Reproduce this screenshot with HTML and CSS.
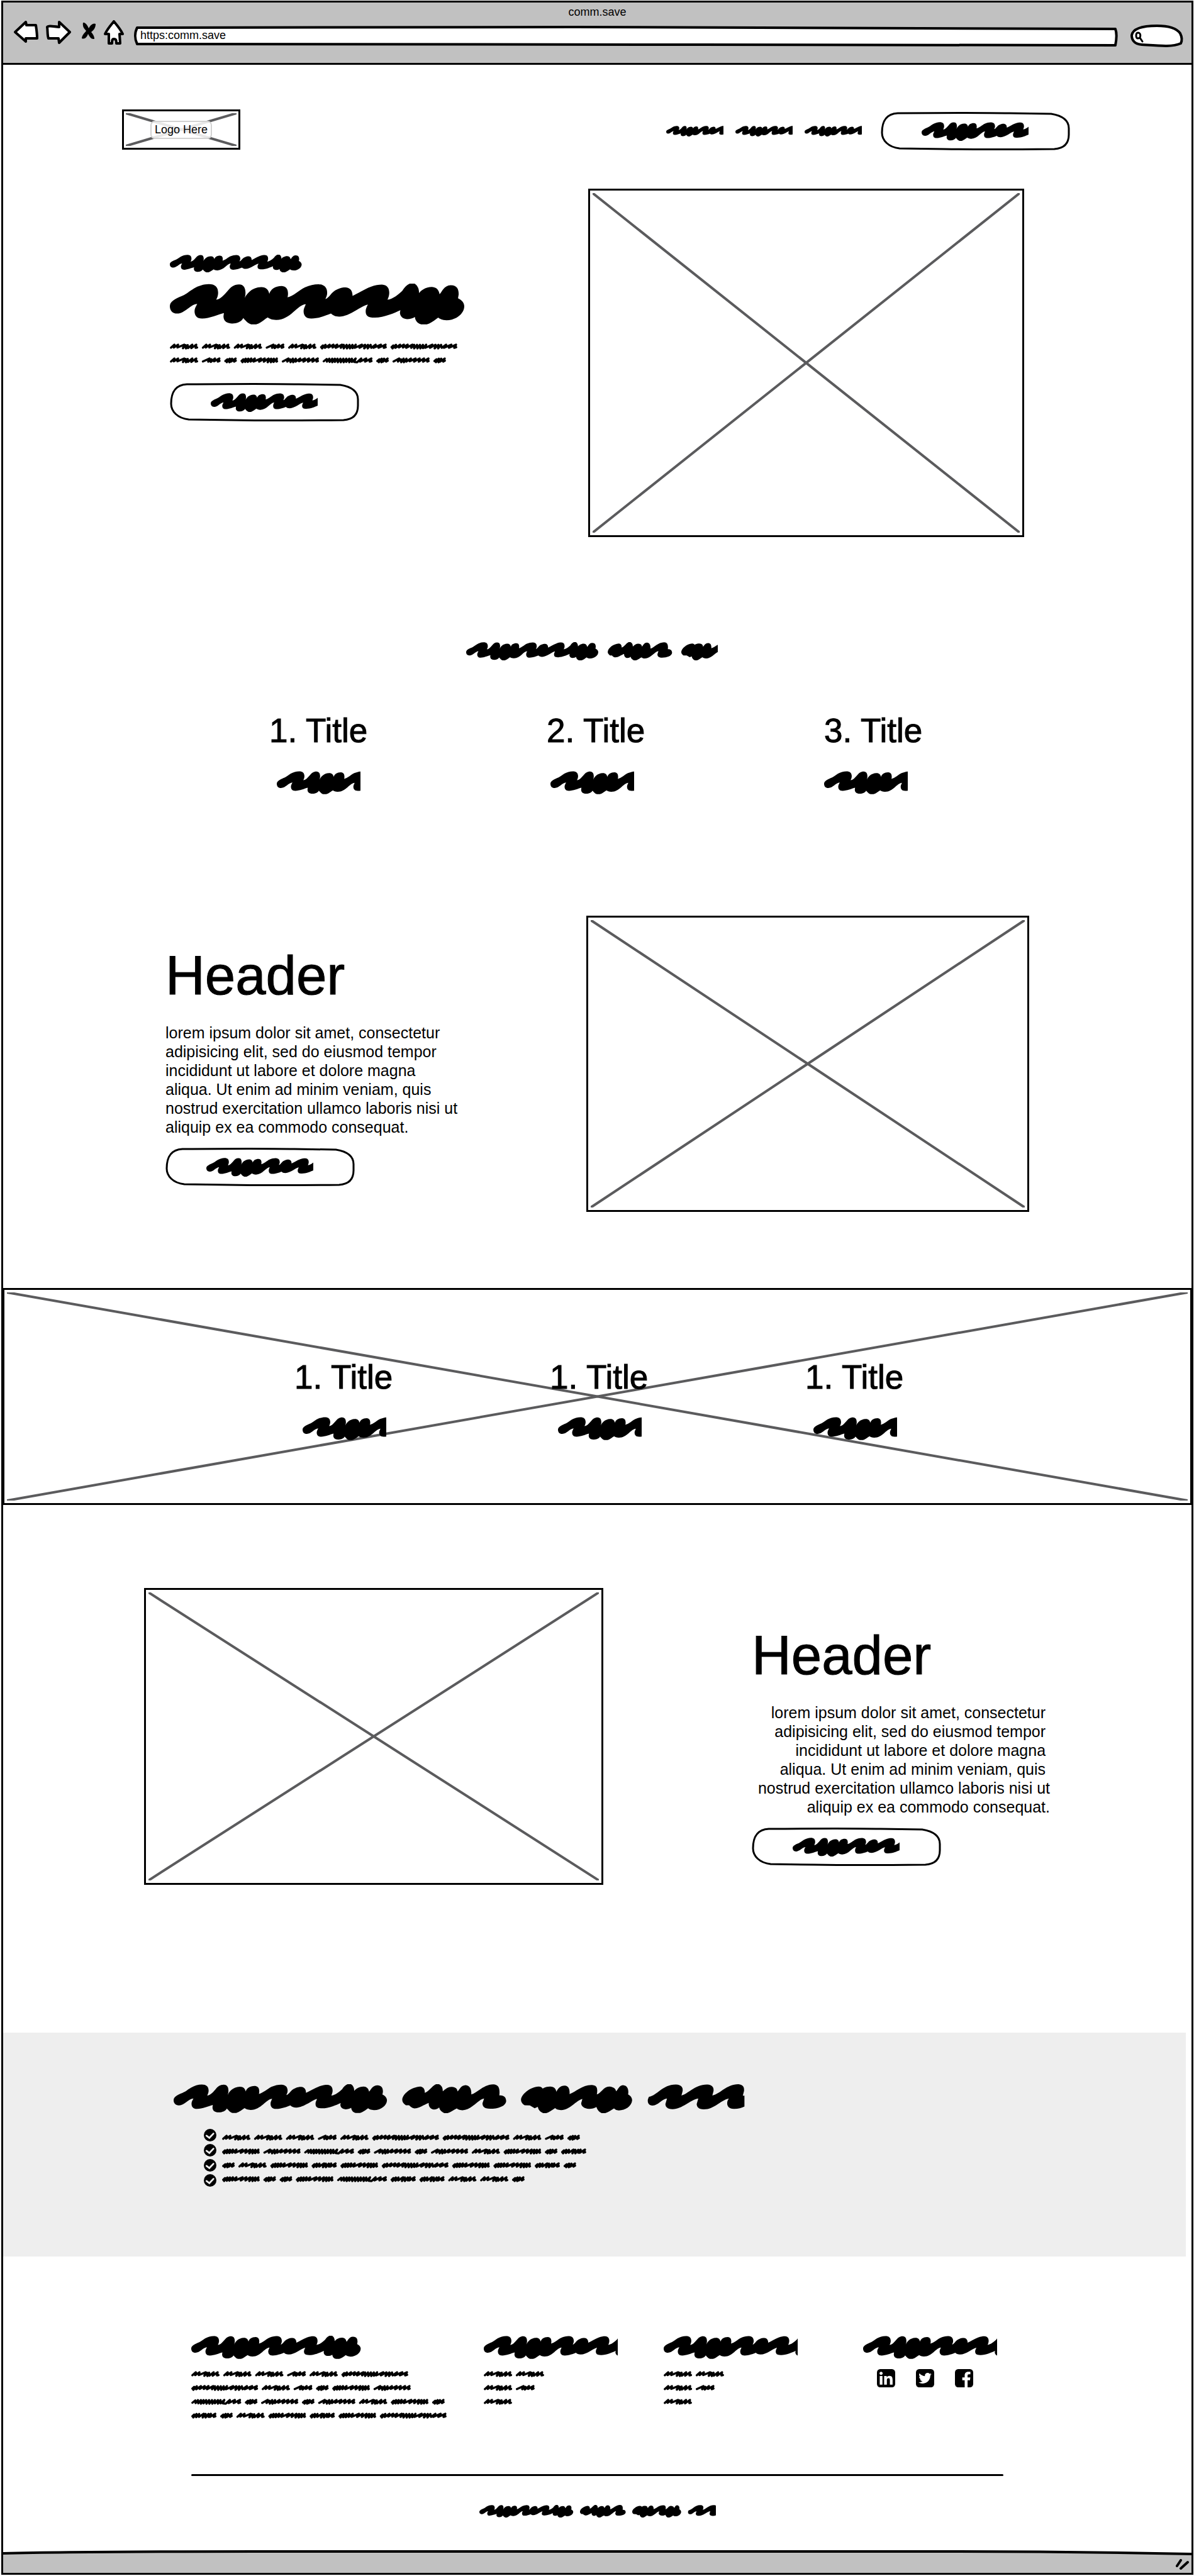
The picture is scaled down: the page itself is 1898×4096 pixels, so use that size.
FILE: index.html
```html
<!DOCTYPE html>
<html lang="en">
<head>
<meta charset="utf-8">
<meta name="viewport" content="width=device-width, initial-scale=1">
<title>comm.save</title>
<link rel="stylesheet" href="styles.css">
</head>
<body>
<svg class="defs" aria-hidden="true">
  <defs>
    <!-- One line of greeked heading text; each use shows as much of it as its viewBox covers -->
    <g id="headline">
      <path transform="translate(62 213) scale(.402 .7143) translate(-97 -327)" d="M97,482 C97,455 110,440 140,418 C170,402 185,378 205,360 C225,342 250,330 272,330 C300,330 314,350 314,390 C314,410 309,425 305,437 C325,435 340,405 355,380 C370,350 385,332 408,332 C430,332 437,360 437,390 C437,410 434,420 432,432 C440,400 465,352 508,351 C530,351 540,370 544,397 C550,365 570,343 600,343 C622,345 628,370 628,395 C628,405 627,415 626,421 C650,415 680,370 705,352 C725,338 745,331 765,331 C795,333 804,360 804,390 C804,410 799,420 796,432 C815,425 820,385 850,366 C865,355 875,353 888,353 C910,356 918,380 918,411 C940,395 970,365 1000,348 C1020,336 1035,333 1050,333 C1075,335 1083,360 1083,390 C1083,410 1078,425 1075,437 C1100,432 1125,400 1142,375 C1152,352 1160,338 1175,327 L1197,327 C1210,340 1217,360 1217,392 C1225,375 1245,350 1275,350 C1298,352 1306,375 1309,399 C1320,385 1328,340 1359,338 C1390,338 1395,370 1395,400 L1392,427 C1410,440 1420,460 1420,482 C1420,530 1385,578 1340,578 C1320,577 1310,568 1303,560 C1290,575 1270,598 1252,606 L1226,606 C1208,598 1200,580 1198,555 C1190,565 1175,570 1163,570 C1140,568 1131,545 1131,525 L1133,509 C1110,525 1060,560 1018,560 C985,560 977,545 977,515 C977,500 982,485 987,470 C960,475 905,553 858,553 C840,553 830,545 821,532 C800,545 765,565 733,566 C708,566 698,545 698,515 C698,500 703,485 708,468 C670,470 640,575 575,576 C555,575 545,568 537,559 C522,572 505,598 485,606 L462,606 C445,598 438,580 427,563 C420,585 400,600 377,600 C350,599 338,580 338,550 L340,528 C315,538 275,565 242,566 C218,566 208,545 208,515 C208,500 213,485 220,466 C190,468 165,532 130,532 C108,532 97,510 97,482Z"/>
      <path d="M632,322 C632,280 655,232 677,229 C685,232 689,250 688,273 C698,265 705,228 716,213 L723,213 C731,222 733,240 733,262 C740,245 746,231 755,231 C766,233 769,245 770,263 C775,250 778,220 790,219 C801,222 805,250 804,284 C820,270 835,215 859,214 C872,216 876,240 874,291 C885,288 891,305 891,330 C890,365 870,383 851,383 C835,383 832,365 832,345 L836,312 C820,320 805,393 782,393 C774,392 770,385 768,380 C760,390 752,408 745,413 L737,413 C730,405 725,390 724,374 C721,382 717,388 711,388 C702,386 697,365 698,342 C685,355 675,380 662,380 C656,378 652,368 649,359 L641,359 C635,348 632,335 632,322Z"/>
      <path d="M928,322 C928,285 950,232 972,229 C978,230 980,235 982,243 C988,232 993,229 1001,229 C1011,230 1015,245 1016,265 C1020,245 1026,223 1037,223 C1047,225 1050,250 1049,281 C1065,265 1080,219 1104,218 C1117,219 1120,240 1117,284 C1128,275 1133,230 1148,229 C1160,232 1164,245 1165,262 C1170,250 1173,220 1182,219 C1194,222 1197,250 1195,284 C1202,295 1205,308 1205,325 C1204,365 1188,394 1172,394 C1165,393 1162,385 1160,380 C1152,392 1145,408 1138,413 L1129,413 C1122,405 1118,390 1116,371 C1111,380 1105,384 1098,384 C1085,382 1078,365 1078,345 L1081,315 C1065,325 1050,392 1028,392 C1020,391 1016,385 1013,378 C1005,392 998,408 991,413 L983,413 C976,405 971,390 970,370 L962,379 L950,360 L937,359 C931,350 928,335 928,322Z"/>
      <path d="M1244,325 C1244,315 1246,308 1247,300 C1268,290 1280,216 1314,215 C1328,217 1332,235 1331,260 L1328,291 C1345,280 1360,216 1392,215 C1405,217 1409,235 1408,260 L1405,291 C1425,280 1440,213 1470,213 C1482,216 1485,235 1484,260 L1481,292 L1485,292 V367 C1478,375 1470,384 1459,384 C1446,384 1442,365 1442,345 C1442,330 1444,322 1446,312 C1425,325 1410,387 1384,387 C1370,387 1366,368 1366,350 L1370,312 C1350,320 1330,386 1306,386 C1292,385 1288,368 1288,350 L1292,312 C1278,318 1270,360 1256,361 C1247,360 1244,345 1244,325Z"/>
    </g>
    <g id="button-art">
      <path class="outline" d="M27,2 Q150,1 205,2 L271,3 C289,6 299,14 299,26 V36 C299,50 291,58 276,59 Q165,60 100,59 L30,58 C12,56 2,45 2,33 C2,14 9,3 27,2Z"/>
      <svg x="65" y="16" width="170" height="30" viewBox="62 213 414 200" preserveAspectRatio="none"><use href="#headline"/></svg>
    </g>
    <g id="tick">
      <circle cx="42" cy="42" r="42"/>
      <path class="tick-mark" d="M18,46 L37,60 L64,32"/>
    </g>
  </defs>
</svg>

<div class="browser">
  <header class="toolbar">
    <div class="window-title">comm.save</div>
    <div class="controls">
      <button class="tool back" type="button" aria-label="Back"><svg width="39" height="35"><path class="tool-shape" d="M2,18 L19,2 L20,7 L35,7 C36,14 37,20 37,28 L19,28 L19,33Z"/></svg></button>
      <button class="tool forward" type="button" aria-label="Forward"><svg width="40" height="37"><path class="tool-shape" d="M2,10 C3,8 8,8 21,10 L21,2 L38,18 L21,35 L20,28 L4,28 C2,22 3,16 2,10Z"/></svg></button>
      <button class="tool stop" type="button" aria-label="Stop"><svg width="23" height="27"><path d="M2,0 C6,-1 10,6 11,9 C14,3 19,0 22,2 C22,8 19,12 15,15 C20,21 20,24 20,26 C14,27 12,21 10,18 C8,23 5,27 0,25 C0,20 5,16 7,13 C3,9 1,6 2,0Z"/></svg></button>
      <button class="tool home" type="button" aria-label="Home"><svg width="33" height="39"><path class="tool-shape" d="M16,2 C21,8 27,15 30,22 L25,22 L26,37 L20,37 C20,33 20,30 16,30 C13,30 13,33 13,37 L8,37 L8,22 L2,22 C5,15 11,8 16,2Z"/></svg></button>
      <div class="address">
        <svg class="field-art" viewBox="0 0 1564 32" preserveAspectRatio="none"><path class="tool-shape" d="M5,2 L700,1 L1560,4 C1563,12 1562,20 1560,30 L900,29 L5,28 C1,20 1,10 5,2Z"/></svg>
        <input class="address-input" type="text" value="https:comm.save" aria-label="Address">
      </div>
      <div class="search">
        <svg class="field-art" viewBox="0 0 84 36"><path class="tool-shape" d="M18,32 C4,31 2,22 2,17 C4,6 20,2 42,2 C62,2 74,7 79,14 C82,20 82,26 80,30 C66,36 48,34 18,32Z"/><path class="lens" d="M12,13 C8,13 8,22 12,22 C17,22 17,13 12,13Z M15,21 L19,27"/></svg>
        <input class="search-input" type="search" aria-label="Search">
      </div>
    </div>
  </header>

  <main>
    <div class="topbar">
      <a class="logo" href="#"><svg class="cross" viewBox="0 0 100 100" preserveAspectRatio="none"><path d="M0,0 L100,100 M0,100 L100,0"/></svg><span class="logo-label">Logo Here</span></a>
      <nav class="nav" aria-label="Main">
        <a class="nav-link" href="#" aria-label="Link one"><svg width="91" height="17" viewBox="62 213 382 200" preserveAspectRatio="none"><use href="#headline"/></svg></a>
        <a class="nav-link" href="#" aria-label="Link two"><svg width="91" height="17" viewBox="62 213 382 200" preserveAspectRatio="none"><use href="#headline"/></svg></a>
        <a class="nav-link" href="#" aria-label="Link three"><svg width="91" height="17" viewBox="62 213 382 200" preserveAspectRatio="none"><use href="#headline"/></svg></a>
        <button class="pill" type="button" aria-label="Action"><svg width="301" height="61"><use href="#button-art"/></svg></button>
      </nav>
    </div>

    <section class="hero">
      <div class="hero-copy">
        <svg width="210" height="28" viewBox="62 213 533 200" preserveAspectRatio="none"><use href="#headline"/></svg>
        <svg class="hero-title" width="469" height="65" viewBox="62 213 533 200" preserveAspectRatio="none"><use href="#headline"/></svg>
        <div class="greek hero-text" data-words="5 5 5 3 5 12 12|5 3 2 7 6 10 2 6 2"></div>
        <button class="pill" type="button" aria-label="Action"><svg width="301" height="61"><use href="#button-art"/></svg></button>
      </div>
      <div class="picture hero-picture"><svg class="cross" viewBox="0 0 100 100" preserveAspectRatio="none"><path d="M0,0 L100,100 M0,100 L100,0"/></svg></div>
    </section>

    <section class="steps">
      <div class="steps-heading"><svg width="400" height="29" viewBox="62 213 1013 200" preserveAspectRatio="none"><use href="#headline"/></svg></div>
      <div class="steps-titles">
        <h3 class="step-title">1. Title</h3>
        <h3 class="step-title">2. Title</h3>
        <h3 class="step-title">3. Title</h3>
      </div>
      <div class="steps-notes">
        <svg width="133" height="37" viewBox="62 213 264 200" preserveAspectRatio="none"><use href="#headline"/></svg>
        <svg width="133" height="37" viewBox="62 213 264 200" preserveAspectRatio="none"><use href="#headline"/></svg>
        <svg width="133" height="37" viewBox="62 213 264 200" preserveAspectRatio="none"><use href="#headline"/></svg>
      </div>
    </section>

    <section class="feature feature-left">
      <div class="feature-copy">
        <h2 class="feature-title">Header</h2>
        <p class="feature-text">lorem ipsum dolor sit amet, consectetur<br>adipisicing elit, sed do eiusmod tempor<br>incididunt ut labore et dolore magna<br>aliqua. Ut enim ad minim veniam, quis<br>nostrud exercitation ullamco laboris nisi ut<br>aliquip ex ea commodo consequat.</p>
        <button class="pill" type="button" aria-label="Action"><svg width="301" height="61"><use href="#button-art"/></svg></button>
      </div>
      <div class="picture wide-picture"><svg class="cross" viewBox="0 0 100 100" preserveAspectRatio="none"><path d="M0,0 L100,100 M0,100 L100,0"/></svg></div>
    </section>

    <section class="band">
      <div class="band-art"><svg class="cross" viewBox="0 0 100 100" preserveAspectRatio="none"><path d="M0,0 L100,100 M0,100 L100,0"/></svg></div>
      <article class="band-item"><h3 class="step-title">1. Title</h3><svg width="133" height="37" viewBox="62 213 264 200" preserveAspectRatio="none"><use href="#headline"/></svg></article>
      <article class="band-item"><h3 class="step-title">1. Title</h3><svg width="133" height="37" viewBox="62 213 264 200" preserveAspectRatio="none"><use href="#headline"/></svg></article>
      <article class="band-item"><h3 class="step-title">1. Title</h3><svg width="133" height="37" viewBox="62 213 264 200" preserveAspectRatio="none"><use href="#headline"/></svg></article>
    </section>

    <section class="feature feature-right">
      <div class="picture tall-picture"><svg class="cross" viewBox="0 0 100 100" preserveAspectRatio="none"><path d="M0,0 L100,100 M0,100 L100,0"/></svg></div>
      <div class="feature-copy">
        <h2 class="feature-title">Header</h2>
        <p class="feature-text text-right">lorem ipsum dolor sit amet, consectetur&nbsp;<br>adipisicing elit, sed do eiusmod tempor&nbsp;<br>incididunt ut labore et dolore magna&nbsp;<br>aliqua. Ut enim ad minim veniam, quis&nbsp;<br>nostrud exercitation ullamco laboris nisi ut<br>aliquip ex ea commodo consequat.</p>
        <button class="pill" type="button" aria-label="Action"><svg width="301" height="61"><use href="#button-art"/></svg></button>
      </div>
    </section>

    <section class="benefits">
      <svg width="908" height="46" viewBox="62 213 1424 200" preserveAspectRatio="none"><use href="#headline"/></svg>
      <div class="benefit-list">
        <div class="ticks">
          <svg width="20" height="20" viewBox="0 0 84 84"><use href="#tick"/></svg>
          <svg width="20" height="20" viewBox="0 0 84 84"><use href="#tick"/></svg>
          <svg width="20" height="20" viewBox="0 0 84 84"><use href="#tick"/></svg>
          <svg width="20" height="20" viewBox="0 0 84 84"><use href="#tick"/></svg>
        </div>
        <div class="greek benefit-text" data-words="5 5 5 3 5 12 12 5 3 2|7 6 10 2 6 2 6 5 7 2 4|2 5 7 4 7 12 7 7 4 2|7 2 2 7 10 4 4 5 5 2"></div>
      </div>
    </section>
  </main>

  <footer class="footer">
    <div class="footer-columns">
      <div>
        <svg width="270" height="37" viewBox="62 213 533 200" preserveAspectRatio="none"><use href="#headline"/></svg>
        <div class="greek footer-text" data-words="5 5 5 3 5 12|12 5 3 2 7 6|10 2 6 2 6 5 7 2|4 2 5 7 4 7 12"></div>
      </div>
      <div>
        <svg width="213" height="37" viewBox="62 213 423 200" preserveAspectRatio="none"><use href="#headline"/></svg>
        <div class="greek footer-text" data-words="5 5|5 3|5"></div>
      </div>
      <div>
        <svg width="213" height="37" viewBox="62 213 423 200" preserveAspectRatio="none"><use href="#headline"/></svg>
        <div class="greek footer-text" data-words="5 5|5 3|5"></div>
      </div>
      <div>
        <svg width="213" height="37" viewBox="62 213 423 200" preserveAspectRatio="none"><use href="#headline"/></svg>
        <div class="social">
          <a href="#" aria-label="LinkedIn"><svg width="29" height="29" viewBox="0 32 448 448"><rect y="32" width="448" height="448" rx="80"/><path class="mark" d="M135.4 416H69V202.2h66.5V416zm-33.2-243c-21.3 0-38.5-17.3-38.5-38.5S80.9 96 102.2 96c21.2 0 38.5 17.3 38.5 38.5 0 21.3-17.2 38.5-38.5 38.5zm282.1 243h-66.4V312c0-24.8-.5-56.7-34.5-56.7-34.6 0-39.9 27-39.9 54.9V416h-66.4V202.2h63.7v29.2h.9c8.9-16.8 30.6-34.5 62.9-34.5 67.2 0 79.7 44.3 79.7 101.9V416z"/></svg></a>
          <a href="#" aria-label="Twitter"><svg width="29" height="29" viewBox="0 32 448 448"><rect y="32" width="448" height="448" rx="80"/><path class="mark" d="M351.1 190.8c.2 2.8.2 5.7.2 8.5 0 86.7-66 186.6-186.6 186.6-37.2 0-71.7-10.8-100.7-29.4 5.3.6 10.4.8 15.8.8 30.7 0 58.9-10.4 81.4-28-28.8-.6-53-19.5-61.3-45.5 10.1 1.5 19.2 1.5 29.6-1.2-30-6.1-52.5-32.5-52.5-64.4v-.8c8.7 4.9 18.9 7.9 29.6 8.3a65.447 65.447 0 0 1-29.2-54.6c0-12.2 3.2-23.4 8.9-33.1 32.3 39.8 80.8 65.8 135.2 68.6-9.3-44.5 24-80.6 64-80.6 18.9 0 35.9 7.9 47.9 20.7 14.8-2.8 29-8.3 41.6-15.8-4.9 15.2-15.2 28-28.8 36.1 13.2-1.4 26-5.1 37.8-10.2-8.9 13.1-20.1 24.7-32.9 34z"/></svg></a>
          <a href="#" aria-label="Facebook"><svg width="29" height="29" viewBox="0 32 448 448"><rect y="32" width="448" height="448" rx="80"/><path class="mark" d="M310 480V307H369L378 238H310V194C310 174 316 161 344 161H380V99C374 98 352 96 327 96C274 96 239 128 239 187V238H180V307H239V480Z"/></svg></a>
        </div>
      </div>
    </div>
    <hr class="rule">
    <div class="copyright"><svg width="376" height="20" viewBox="62 213 1340 200" preserveAspectRatio="none"><use href="#headline"/></svg></div>
  </footer>

  <div class="statusbar">
    <svg class="status-art" viewBox="0 0 1889 36" preserveAspectRatio="none"><path class="status-fill" d="M0,5 Q120,2 400,2 L1500,2 Q1700,2 1889,6 V36 H0Z"/><path class="status-line" d="M0,5 Q120,2 400,2 L1500,2 Q1700,2 1889,6"/></svg>
    <svg class="grip" width="22" height="18"><path d="M2,11 L8,2 M8,15 L19,5"/></svg>
  </div>
</div>
<script src="greek.js"></script>
</body>
</html>
```
FILE: styles.css
```css
* {
  box-sizing: border-box;
}

body {
  margin: 0;
  background: #fff;
  color: #000;
  font-family: "Liberation Sans", Arial, sans-serif;
  font-size: 18px;
}

svg {
  display: block;
}

button {
  padding: 0;
  border: 0;
  background: none;
  cursor: pointer;
}

h2,
h3,
p {
  margin: 0;
  font-weight: 400;
}

.defs {
  position: absolute;
  width: 0;
  height: 0;
}

.outline {
  fill: #fff;
  stroke: #000;
  stroke-width: 3;
}

.tick-mark {
  fill: none;
  stroke: #eee;
  stroke-width: 12;
  stroke-linecap: round;
}

.browser {
  margin: 1px 1px 2px 2px;
  border: 3px solid #000;
}

/* Browser toolbar */

.toolbar {
  height: 99px;
  border-bottom: 3px solid #000;
  background: #c1c1c1;
}

.window-title {
  padding-top: 5px;
  line-height: 20px;
  text-align: center;
}

.controls {
  display: flex;
  align-items: flex-start;
  padding: 3px 13px 0 17px;
}

.tool-shape {
  fill: #fff;
  stroke: #000;
  stroke-width: 4;
  stroke-linejoin: round;
}

.back {
  margin: 1px 12px 0 0;
}

.forward {
  margin: 1px 17px 0 0;
}

.stop {
  margin: 4px 12px 0 0;
}

.home {
  margin-right: 15px;
}

.address {
  position: relative;
  flex: 1;
  height: 32px;
  margin: 10px 20px 0 0;
}

.search {
  position: relative;
  width: 84px;
  height: 36px;
  margin-top: 7px;
}

.field-art {
  position: absolute;
  width: 100%;
  height: 100%;
  overflow: visible;
}

.lens {
  fill: none;
  stroke: #000;
  stroke-width: 3;
  stroke-linecap: round;
}

.address-input,
.search-input {
  position: relative;
  width: 100%;
  height: 28px;
  padding: 0 0 0 10px;
  border: 0;
  outline: 0;
  background: none;
  color: inherit;
  font: inherit;
}

.search-input {
  padding: 0 8px 0 24px;
}

/* Wireframe picture placeholders */

.picture {
  padding: 4px;
  border: 3px solid #000;
}

.cross {
  width: 100%;
  height: 100%;
  fill: none;
  stroke: #5b5b5d;
  stroke-width: 4;
}

.cross path {
  vector-effect: non-scaling-stroke;
}

.hero-picture {
  aspect-ratio: 693 / 554;
}

.wide-picture {
  aspect-ratio: 704 / 471;
}

.tall-picture {
  aspect-ratio: 730 / 472;
}

/* Site header */

.topbar {
  display: flex;
  justify-content: space-between;
  align-items: flex-start;
  padding: 71px 193px 0 189px;
}

.logo {
  position: relative;
  display: flex;
  justify-content: center;
  align-items: center;
  width: 188px;
  height: 64px;
  padding: 3px;
  border: 3px solid #000;
  color: #000;
  text-decoration: none;
}

.logo-label {
  position: absolute;
  padding: 0 5px;
  border: 2px solid #d2d2d2;
  border-radius: 7px;
  background: rgba(255, 255, 255, 0.86);
  line-height: 25px;
  white-space: nowrap;
}

.nav {
  display: flex;
  align-items: center;
  gap: 19px;
  margin-top: 4px;
}

.nav .pill {
  margin-left: 11px;
}

/* Hero */

.hero {
  display: grid;
  grid-template-columns: 665fr 693fr;
  align-items: start;
  padding: 61px 266px 0 265px;
}

.hero-copy {
  padding-top: 105px;
}

.hero-title {
  margin-top: 18px;
}

.hero-text {
  margin: 30px 0 31px;
}

.greek {
  display: flex;
  flex-direction: column;
  gap: 12px;
}

.greek svg {
  fill: none;
  stroke: #000;
  stroke-width: 15;
  stroke-linecap: round;
  stroke-linejoin: round;
}

/* Three steps */

.steps {
  padding-top: 167px;
}

.steps-heading {
  display: flex;
  justify-content: center;
  padding-right: 17px;
}

.steps-titles {
  display: grid;
  grid-template-columns: repeat(3, 1fr);
  padding: 82px 143px 0 423px;
}

.steps-notes {
  display: grid;
  grid-template-columns: repeat(3, 1fr);
  padding: 34px 149px 0 435px;
}

.step-title {
  font-size: 53px;
  line-height: 60px;
  -webkit-text-stroke: 1px #000;
}

/* Text beside a picture */

.feature {
  display: grid;
  align-items: start;
}

.feature-left {
  grid-template-columns: 669fr 704fr;
  padding: 193px 258px 0;
}

.feature-left .feature-copy {
  padding-top: 47px;
}

.feature-right {
  grid-template-columns: 730fr 474fr;
  column-gap: 236px;
  padding: 132px 225px 0 224px;
}

.feature-right .feature-copy {
  padding-top: 59px;
}

.feature-title {
  font-size: 87px;
  line-height: 96px;
  -webkit-text-stroke: 1px #000;
}

.feature-text {
  margin: 28px 0 18px;
  font-size: 25px;
  line-height: 30px;
  white-space: nowrap;
}

.text-right {
  text-align: right;
}

/* Full-width picture with three titles */

.band {
  position: relative;
  display: grid;
  grid-template-columns: repeat(3, 1fr);
  margin-top: 121px;
  padding: 109px 206px 100px 461px;
  border: 3px solid #000;
  border-width: 3px 2px;
}

.band-art {
  position: absolute;
  inset: 4px;
}

.band-item {
  position: relative;
}

.band-item svg {
  margin: 33px 0 0 13px;
}

/* Benefits */

.benefits {
  margin: 235px 9px 0 0;
  padding: 82px 0 111px 271px;
  background: #eee;
}

.benefit-list {
  display: flex;
  gap: 9px;
  padding: 25px 0 0 48px;
}

.ticks {
  display: flex;
  flex-direction: column;
  gap: 4px;
}

.benefit-text {
  padding-top: 9px;
}

/* Footer */

.footer {
  padding: 126px 299px 52px;
}

.footer-columns {
  display: grid;
  grid-template-columns: 465fr 286fr 317fr 223fr;
}

.footer-text {
  margin-top: 19px;
}

.social {
  display: flex;
  gap: 33px;
  padding: 16px 0 0 22px;
}

.mark {
  fill: #fff;
}

.rule {
  height: 3px;
  margin: 88px 0 46px;
  border: 0;
  border-radius: 2px;
  background: #000;
}

.copyright {
  display: flex;
  justify-content: center;
}

/* Status bar */

.statusbar {
  position: relative;
  height: 36px;
}

.status-art {
  width: 100%;
  height: 100%;
}

.status-fill {
  fill: #c1c1c1;
}

.status-line {
  fill: none;
  stroke: #000;
  stroke-width: 4;
}

.grip {
  position: absolute;
  right: 3px;
  bottom: 4px;
  stroke: #000;
  stroke-width: 4;
  stroke-linecap: round;
}
```
FILE: greek.js
```javascript
// Draws small greeked text. data-words lists word lengths; "|" starts a new line.
const WORDS = {
  2: [87, "M8,26 L22,14 L18,34 L38,10 L36,34 L54,10 L46,30 L78,9 L68,30 L79,24"],
  3: [129, "M8,29 L53,9 L44,30 L66,14 L62,32 L90,9 L84,28 L120,9 L110,30 L121,25"],
  4: [173, "M8,26 L20,14 L14,34 L36,10 L34,32 L54,10 L52,30 L86,9 L78,34 L98,10 L98,34 L118,10 L118,30 L134,9 L128,30 L164,9 L154,30 L165,26"],
  5: [194, "M8,29 L31,9 L27,28 L56,9 L52,28 L98,9 L90,33 L108,12 L110,34 L122,12 L124,32 L153,9 L147,32 L180,9 L176,30 L186,28"],
  6: [255, "M8,29 L46,9 L38,30 L58,14 L60,34 L76,10 L78,34 L96,10 L94,30 L126,9 L118,28 L158,9 L148,30 L186,9 L180,30 L216,9 L210,30 L246,9 L238,30 L247,26"],
  7: [258, "M8,26 L20,14 L14,34 L36,10 L32,32 L54,10 L50,32 L74,9 L70,30 L98,9 L90,30 L140,9 L128,30 L166,9 L160,30 L192,9 L186,34 L210,10 L208,34 L228,10 L226,32 L248,9 L246,30 L250,28"],
  10: [342, "M8,28 L28,12 L30,30 L46,10 L48,32 L66,10 L66,34 L84,10 L84,32 L102,10 L104,34 L122,10 L124,34 L142,10 L144,34 L162,10 L162,32 L182,10 L182,34 L200,10 L200,32 L226,9 L216,32 L236,34 L264,9 L256,30 L298,9 L290,30 L333,9 L322,30 L334,26"],
  12: [457, "M8,26 L20,14 L14,34 L38,10 L34,30 L66,9 L58,28 L92,9 L86,28 L118,9 L108,30 L150,9 L142,30 L162,10 L162,34 L182,10 L184,34 L202,10 L204,34 L222,10 L222,32 L244,9 L238,30 L286,9 L270,30 L308,10 L302,34 L328,10 L326,34 L346,10 L350,30 L380,9 L366,30 L416,9 L400,30 L448,9 L436,30 L449,26"]
};
const SPACE = 24;
const LINE_UNITS = 43;
const LINE_HEIGHT = 10;

document.querySelectorAll(".greek").forEach((block) => {
  block.innerHTML = block.dataset.words.split("|").map((line) => {
    let x = 0;
    const paths = line.split(" ").map((key) => {
      const [width, d] = WORDS[key];
      const path = `<path transform="translate(${x} 0)" d="${d}"/>`;
      x += width + SPACE;
      return path;
    });
    const units = x - SPACE;
    const width = Math.round(units * LINE_HEIGHT / LINE_UNITS);
    return `<svg width="${width}" height="${LINE_HEIGHT}" viewBox="0 0 ${units} ${LINE_UNITS}" preserveAspectRatio="none" aria-hidden="true">${paths.join("")}</svg>`;
  }).join("");
});
```
